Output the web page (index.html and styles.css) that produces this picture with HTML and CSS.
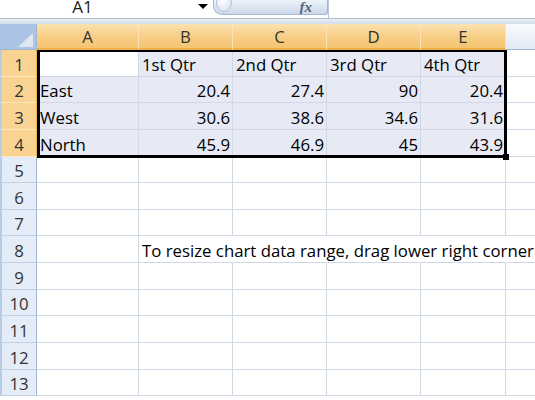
FILE: index.html
```html
<!DOCTYPE html>
<html lang="en">
<head>
  <meta charset="UTF-8">
  <title>Book1 - Chart Data</title>
  <link rel="stylesheet" href="styles.css">
</head>
<body>

<!-- Name box + formula bar -->
<div class="topbar">
  <div class="namebox">
    <span class="ref">A1</span>
    <span class="drop"></span>
  </div>
  <div class="fxbtn"><span class="knob"></span><span class="fx">fx</span></div>
  <div class="formula"></div>
</div>
<div class="strip"></div>

<!-- Worksheet -->
<div class="sheet">
  <div class="corner"></div>
  <div class="colhead sel">A</div>
  <div class="colhead sel">B</div>
  <div class="colhead sel">C</div>
  <div class="colhead sel">D</div>
  <div class="colhead sel">E</div>
  <div class="colhead"></div>

  <div class="rowhead sel">1</div>
  <div class="c active"></div>
  <div class="c in">1st Qtr</div>
  <div class="c in">2nd Qtr</div>
  <div class="c in">3rd Qtr</div>
  <div class="c in">4th Qtr</div>
  <div class="c"></div>

  <div class="rowhead sel">2</div>
  <div class="c in">East</div>
  <div class="c in num">20.4</div>
  <div class="c in num">27.4</div>
  <div class="c in num">90</div>
  <div class="c in num">20.4</div>
  <div class="c"></div>

  <div class="rowhead sel">3</div>
  <div class="c in">West</div>
  <div class="c in num">30.6</div>
  <div class="c in num">38.6</div>
  <div class="c in num">34.6</div>
  <div class="c in num">31.6</div>
  <div class="c"></div>

  <div class="rowhead sel">4</div>
  <div class="c in">North</div>
  <div class="c in num">45.9</div>
  <div class="c in num">46.9</div>
  <div class="c in num">45</div>
  <div class="c in num">43.9</div>
  <div class="c"></div>

  <div class="rowhead">5</div>
  <div class="c"></div><div class="c"></div><div class="c"></div><div class="c"></div><div class="c"></div><div class="c"></div>
  <div class="rowhead">6</div>
  <div class="c"></div><div class="c"></div><div class="c"></div><div class="c"></div><div class="c"></div><div class="c"></div>
  <div class="rowhead">7</div>
  <div class="c"></div><div class="c"></div><div class="c"></div><div class="c"></div><div class="c"></div><div class="c"></div>

  <div class="rowhead">8</div>
  <div class="c"></div>
  <div class="c spill">To resize chart data range, drag lower right corner of range.</div>
  <div class="c spill"></div><div class="c spill"></div><div class="c spill"></div><div class="c spill"></div>

  <div class="rowhead">9</div>
  <div class="c"></div><div class="c"></div><div class="c"></div><div class="c"></div><div class="c"></div><div class="c"></div>
  <div class="rowhead">10</div>
  <div class="c"></div><div class="c"></div><div class="c"></div><div class="c"></div><div class="c"></div><div class="c"></div>
  <div class="rowhead">11</div>
  <div class="c"></div><div class="c"></div><div class="c"></div><div class="c"></div><div class="c"></div><div class="c"></div>
  <div class="rowhead">12</div>
  <div class="c"></div><div class="c"></div><div class="c"></div><div class="c"></div><div class="c"></div><div class="c"></div>
  <div class="rowhead">13</div>
  <div class="c"></div><div class="c"></div><div class="c"></div><div class="c"></div><div class="c"></div><div class="c"></div>

  <!-- selected range A1:E4 -->
  <div class="selection"><span class="handle"></span></div>
</div>

</body>
</html>
```

FILE: styles.css
```css
* { box-sizing: border-box; }
body {
  margin: 0;
  width: 535px;
  height: 400px;
  overflow: hidden;
  background: #fff;
  font-family: "Open Sans", Lato, sans-serif;
  color: #000;
}

/* Formula bar */
.topbar {
  display: flex;
  height: 19px;
  border-bottom: 1px solid #b3bfce;
}

.namebox {
  width: 213px;
  display: flex;
  align-items: flex-start;
}

.namebox .ref {
  flex: 1;
  text-align: center;
  font-size: 17px;
  line-height: 14px;
  padding-right: 33px;
  color: #1a1a1a;
}

.drop {
  width: 0;
  height: 0;
  margin: 4px 5px 0 0;
  border-left: 5px solid transparent;
  border-right: 5px solid transparent;
  border-top: 5px solid #000;
}

.fxbtn {
  position: relative;
  width: 115px;
  height: 15px;
  border: 1px solid #a4b6ce;
  border-top: none;
  border-radius: 0 0 3px 9px;
  background: linear-gradient(#eef3fa, #cad8ea);
  display: flex;
  align-items: center;
  justify-content: flex-end;
  padding-right: 15px;
  overflow: hidden;
}

.knob {
  position: absolute;
  left: 2px;
  top: -6px;
  width: 16px;
  height: 18px;
  border-radius: 50%;
  background: radial-gradient(circle at 40% 40%, #fff, #dde6f2 70%);
  border: 1px solid #b6c5d9;
}

.fx {
  font-family: "Liberation Serif", serif;
  font-style: italic;
  font-weight: bold;
  font-size: 15px;
  color: #55667d;
}

.formula {
  flex: 1;
  border-left: 1px solid #b9c6d6;
}

.strip {
  height: 5px;
  background: linear-gradient(#e9eef5, #d6dfeb);
}

/* Grid */
.sheet {
  position: relative;
  display: grid;
  grid-template-columns: 37px 102px 94px 94px 94px 85px 94px;
  grid-template-rows: 26px;
  grid-auto-rows: 26.65px;
  font-size: 16.8px;
}

.corner {
  position: relative;
  background: #abc4e6;
  border-right: 1px solid #9eb6ce;
  border-bottom: 1px solid #9eb6ce;
}

.corner::after {
  content: "";
  position: absolute;
  right: 3px;
  bottom: 2px;
  border-left: 15px solid transparent;
  border-bottom: 14px solid #dfe7f1;
}

.colhead {
  display: flex;
  align-items: center;
  justify-content: center;
  background: linear-gradient(#f9fbfe, #e1e9f5);
  border-right: 1px solid #9eb6ce;
  border-bottom: 1px solid #9eb6ce;
  color: #333;
}

.colhead.sel {
  background: linear-gradient(#fbe2b0, #f8d08b 45%, #f5c470);
  border-right-color: #fbe4b8;
  border-bottom: 2px solid #eeb048;
}

.rowhead {
  display: flex;
  align-items: flex-end;
  justify-content: center;
  line-height: 22px;
  background: #e4ecf7;
  border-left: 2px solid #b8cce6;
  border-right: 1px solid #9eb6ce;
  border-bottom: 1px solid #c3d1e2;
  color: #333;
}

.rowhead.sel {
  background: #f8d392;
  border-bottom-color: #fce6bb;
  border-right-color: #eeb048;
}

.c {
  display: flex;
  align-items: flex-end;
  padding: 0 3px 0;
  line-height: 22px;
  white-space: nowrap;
  border-right: 1px solid #d0d7e5;
  border-bottom: 1px solid #d0d7e5;
}

.c.in { background: #e7eaf4; }
.c.active { background: #fff; }
.c.num { justify-content: flex-end; padding-right: 2px; }
.c.spill { border-right-color: transparent; }

/* Selected range outline */
.selection {
  position: absolute;
  grid-row: 2 / 6;
  grid-column: 2 / 7;
  inset: 0 -1px -1px 0;
  border: 3px solid #000;
  border-top-width: 2px;
  pointer-events: none;
}

.handle {
  position: absolute;
  right: -5px;
  bottom: -5px;
  width: 6px;
  height: 6px;
  background: #000;
}
```
